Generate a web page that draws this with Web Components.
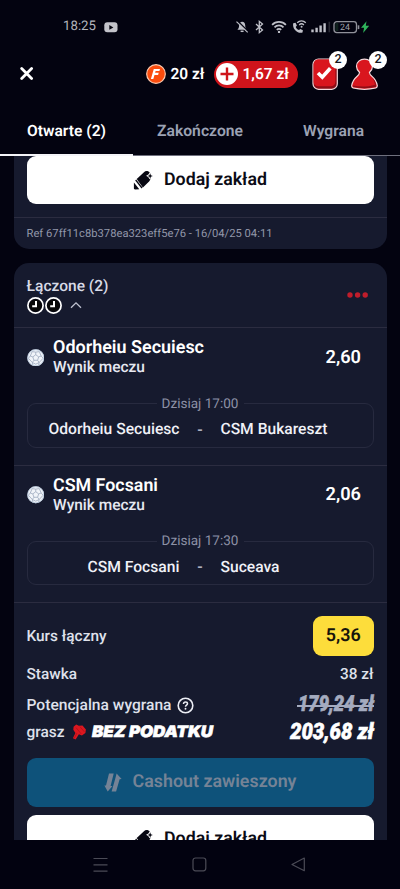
<!DOCTYPE html>
<html lang="pl">
<head>
<meta charset="utf-8">
<title>Zakłady</title>
<style>
html,body{margin:0;height:100%;overflow:hidden;background:#030310}
body{font-family:Roboto,"Liberation Sans",sans-serif;color:#e9ebf3;text-rendering:geometricPrecision}
</style>
</head>
<body>
<bet-app></bet-app>
<script>
const define = (name, html, ready) => {
  const tpl = document.createElement('template');
  tpl.innerHTML = html;
  customElements.define(name, class extends HTMLElement {
    connectedCallback() {
      if (this.shadowRoot) return;
      this.attachShadow({mode: 'open'}).append(tpl.content.cloneNode(true));
      if (ready) ready.call(this, this.shadowRoot);
    }
  });
};

/* One-line label: w = width in px, reached by font size, or by horizontal scale when "squeeze" is set */
define('ui-text', `<style>
:host{display:block;white-space:nowrap;line-height:20px;flex:none}
span{display:inline-block;transform-origin:0 50%}
</style><span><slot></slot></span>`, function (r) {
  const w = +this.getAttribute('w'), s = r.querySelector('span');
  const size = +this.getAttribute('s') || 16;
  this.style.fontSize = size + 'px';
  if (!w) return;
  const real = s.getBoundingClientRect().width;
  this.style.width = w + 'px';
  if (this.hasAttribute('squeeze')) { s.style.transform = 'scaleX(' + w / real + ')'; return; }
  this.style.fontSize = size * w / real + 'px';
  const left = w - s.getBoundingClientRect().width;
  s.style.letterSpacing = left / Math.max(1, this.textContent.length) + 'px';
});

define('status-bar', `<style>
:host{display:flex;height:54px;align-items:center;padding:0 31px 0 63px;color:#b4b5bd;box-sizing:border-box}
.sp{flex:1}svg{display:block;flex:none}
</style>
<ui-text w="33" s="14">18:25</ui-text>
<svg width="14" height="11" viewBox="0 0 14 11" style="margin-left:8px"><rect x=".3" y=".3" width="13.2" height="10" rx="3" fill="#c3c3ca"/><path d="M5.3 3.1v4.6L9.4 5.4z" fill="#05050f"/></svg>
<span class="sp"></span>
<svg width="134" height="16" viewBox="0 0 134 16" fill="none" stroke="#bfc0c8">
 <path d="M2.400 10.800c1.400-1.300 1.600-2.600 1.700-4.600.2-2.200 1.200-3.500 3.100-3.500S10.100 4 10.200 6.200c.1 2 .4 3.300 1.700 4.600z" fill="#bfc0c8" stroke="none"/><path d="M5.600 12.300h3" stroke-width="1.500"/><path d="M2.400 1.700l11 11" stroke="#030310" stroke-width="1.500"/><path d="M1.500 2.600l11.200 10.800" stroke-width="1.200"/>
 <path d="M21 5l6.500 6-3.200 2.700V2.300l3.200 2.700L21 11" stroke-width="1.300"/>
 <g stroke-width="1.700"><path d="M37.100 5.800a9.400 9.400 0 0 1 13.800 0M39.500 8.400a6.200 6.200 0 0 1 9 0M41.800 10.800a3.100 3.100 0 0 1 4.400 0"/></g><circle cx="44" cy="12.900" r="1.200" fill="#bfc0c8" stroke="none"/>
 <path d="M58.200 4.200l2.300-.4 1.400 2.700-1.200 1.400c.7 1.500 1.700 2.500 3.200 3.200l1.500-1.200 2.500 1.300-.4 2.400c-5.500 1.300-10.400-4.100-9.300-9.400z" fill="#bfc0c8" stroke="none"/><path d="M62.200 3.700a6.500 6.500 0 0 1 8.600 0M64.200 5.900a3.500 3.500 0 0 1 4.700 0" stroke-width="1.400"/><circle cx="66.600" cy="7.800" r="1" fill="#bfc0c8" stroke="none"/>
 <g stroke-width="2.400"><path d="M77.500 10.500V13.300M81.600 8.700v4.600M85.600 6.500v6.800M89.600 4.300v9"/></g><path d="M94.300 2.700v10.600" stroke="#292933" stroke-width="1.600"/>
 <rect x="99" y="2.600" width="22.500" height="11" rx="2.800" stroke="#90919a" stroke-width="1.300"/><path d="M100.300 4h3v8h-3z" fill="#173326" stroke="none" opacity=".6"/><path d="M123.500 6.300v3.800" stroke="#90919a" stroke-width="1.600"/>
 <text x="110" y="11.300" text-anchor="middle" font-family="Roboto,sans-serif" font-size="8.800" fill="#a5a5ad" stroke="none">24</text>
 <path d="M131.500 2.200l-5.500 6.600h3.100l-1 5.200 6-7.200h-3.300z" fill="#2fb55b" stroke="none"/>
</svg>`);

define('count-badge', `<style>
:host{position:absolute;right:-9px;top:-6px;width:18px;height:18px;border-radius:50%;background:#fff;color:#15151c;display:flex;align-items:center;justify-content:center;font:500 12.500px/18px Roboto,sans-serif}
</style><slot></slot>`);

define('top-bar', `<style>
:host{display:flex;align-items:center;height:40px;padding:0 21px 0 20px}
svg{display:block;flex:none}.sp{flex:1}
ui-text{color:#fff;font-weight:600}
.pill{display:flex;align-items:center;box-sizing:border-box;width:84.500px;height:27px;border-radius:14px;background:#cf141b;padding-left:2px;margin:0 14px 0 9px;gap:5px}
.ic{position:relative}
</style>
<svg width="14" height="14" viewBox="0 0 14 14" stroke="#fff" stroke-width="2.800" stroke-linecap="round"><path d="M1.700 1.500l9.900 9.900M11.600 1.500l-9.900 9.900"/></svg>
<span class="sp"></span>
<svg width="20" height="20" viewBox="0 0 20 20"><circle cx="10" cy="10" r="9.300" fill="#fb4c0d" stroke="#ffc9ae" stroke-width="1.200"/><path d="M7.800 5h6.200l-.6 2.100H9.600l-.5 1.700h3.600l-.6 2.100H8.500L7.300 15H4.900z" fill="#fff"/></svg>
<ui-text w="34" style="margin-left:5px">20 zł</ui-text>
<div class="pill"><svg width="22" height="22" viewBox="0 0 22 22"><circle cx="11" cy="11" r="11" fill="#fff"/><path d="M11 4.500v13M4.500 11h13" stroke="#cf141b" stroke-width="2.400"/></svg><ui-text w="46.500">1,67 zł</ui-text></div>
<div class="ic"><svg width="26" height="34" viewBox="0 0 26 34"><rect x="1" y="2" width="24.300" height="30.300" rx="5.500" fill="#8e0e16" stroke="#f4dadd" stroke-width="1.200"/><rect x="1.600" y="2.600" width="21.800" height="26.600" rx="4.500" fill="#d9161e"/><path d="M6 16l4.300 4.200 8-9" stroke="#fff" stroke-width="3.600" fill="none"/></svg><count-badge>2</count-badge></div>
<div class="ic" style="margin-left:13px"><svg width="28" height="34" viewBox="0 0 28 34"><path d="M8.600 15.500C6.500 13.500 5.500 11.500 5.500 9.200 5.500 5 9 2.200 13.500 2.200s8 2.800 8 7c0 2.300-1 4.300-3.100 6.300.3 1.700 1 2.500 2.400 3.700 3 2.600 4.900 5.600 5.500 9.300.1 1.200-.4 2-1.500 2.400-6.800 1.700-15.900 1.700-22.700 0C1 30.500.5 29.700.7 28.500c.6-3.700 2.500-6.700 5.500-9.300 1.400-1.200 2.100-2 2.400-3.700z" fill="#d9161e" stroke="#f4dadd" stroke-width="1.200"/><path d="M19.600 19c2.600 2.800 4 5.300 4.400 8.700-7 2.300-15 2.300-22 .9v1.400c7.500 1.500 15.500 1.500 23 0 .4-4.300-1.600-8-5.400-11z" fill="#8e0e16"/></svg><count-badge style="right:-8px">2</count-badge></div>`);

define('tab-bar', `<style>
:host{display:grid;grid-template-columns:133px 1fr 133px;height:62px;color:#9ca2b4;font-weight:600;box-shadow:inset 0 -1px #6f707e}
div{display:flex;align-items:center;justify-content:center;box-sizing:border-box;padding-top:11px}
.on{color:#fff;border-bottom:2px solid #f4f4f8;padding-top:13px}
</style>
<div class="on"><ui-text w="79">Otwarte (2)</ui-text></div><div><ui-text w="86">Zakończone</ui-text></div><div><ui-text w="61">Wygrana</ui-text></div>`);

define('action-button', `<style>
:host{display:flex;height:48.500px;border-radius:9px;background:#fff;color:#0b0b15;align-items:center;justify-content:center;font-weight:600;gap:11px;margin:0 13px}
:host([kind=cash]){background:#0e527a;color:#758396;height:49px}
</style><slot name="icon"></slot><slot></slot>`);

define('pen-icon', `<style>:host{display:block}svg{display:block}</style>
<svg width="20" height="20" viewBox="0 0 20 20" fill="#080812"><path d="M3.700 9.100L10.700 2.400c2-1.900 4.500-1.700 6 .2l-1.300 1.900-2.300 1.300 2.300 1.400 1.200 2.100.8-.8c0 1.200-.5 2.100-1.300 2.900l-6.200 6.200z"/><path d="M3.200 9.600l6.300 8-1 .9-6.300-8.100z"/><path d="M.9 12.400l5.400 6.900-4.200.1c-.8 0-1.200-.4-1.200-1.200z"/><path d="M17.200 3.200l.7 2 1.900.8-1.900.7-.7 2-.8-2-1.900-.7 1.900-.8z"/></svg>`);

define('bet-card', `<style>
:host{display:block;margin:0 13.500px;background:#161a2e;border-radius:15px;flex:none}
</style><slot></slot>`);

define('clock-icon', `<style>:host{display:block}svg{display:block}</style>
<svg width="17" height="17" viewBox="0 0 17 17"><circle cx="8.500" cy="8.500" r="7.600" fill="#080812" stroke="#fff" stroke-width="1.700"/><circle cx="8.500" cy="8.500" r="5.800" fill="#080808"/><path d="M9 4v5.200H5.200" fill="none" stroke="#fff" stroke-width="2"/></svg>`);

define('ball-icon', `<style>:host{display:block}svg{display:block}</style>
<svg width="17.500" height="17.500" viewBox="0 0 18 18"><circle cx="9" cy="9" r="8.700" fill="#f1f4f9"/><g fill="none" stroke="#9aa7bc" stroke-width=".8"><path d="M9 5.900l3 2.200-1.100 3.500H7.100L6 8.100zM9 5.900V3.200M12 8.100l2.600-.9M10.900 11.600l1.600 2.300M7.100 11.600l-1.600 2.300M6 8.100l-2.600-.9M5.300 2.700L9 3.200l3.700-.5 1.900 4.500 2 2.300-4.100 4.400-.5 2.500M9 15.600l3.500-1.700M9 15.600l-3.500-1.700.5 2.500M5.500 13.900L1.400 9.500l2-2.300 1.900-4.500"/></g><circle cx="9" cy="9" r="8.300" fill="none" stroke="#afc2d9" stroke-width=".8"/></svg>`);

define('bet-leg', `<style>
:host{display:block;height:137.500px;box-sizing:border-box;border-bottom:1px solid #2b2c40;padding:10px 13px 0}
.row{display:flex;align-items:center;height:39px}
.names{display:flex;flex-direction:column;flex:1;padding-left:9px}
.names ::slotted([slot=pick]){font-weight:600;color:#fff}
.names ::slotted([slot=market]){line-height:19px;font-weight:500;color:#e7e9f2}
::slotted([slot=odds]){font-weight:600;color:#fff;margin-right:12.500px}
fieldset{margin:16.500px 0 0;border:1px solid #272a3f;border-radius:9px;padding:0;height:54px;min-width:0;width:347px;box-sizing:border-box}
legend{margin:0 auto;padding:0 5px;color:#8d91a6}
.teams{display:grid;grid-template-columns:1fr 41px 1fr;align-items:center;height:32px;color:#f0f1f7;font-weight:500;margin-top:-.5px}
.teams ::slotted([slot=home]){justify-self:end}
.dash{justify-self:center;color:#b3b6c4;font-size:16px}
</style>
<div class="row"><ball-icon></ball-icon><div class="names"><slot name="pick"></slot><slot name="market"></slot></div><slot name="odds"></slot></div>
<fieldset><legend><slot name="time"></slot></legend><div class="teams"><slot name="home"></slot><span class="dash">-</span><slot name="away"></slot></div></fieldset>`);

define('bet-summary', `<style>
:host{display:block;padding:13px 13px 0;color:#dfe1eb;font-weight:500}
.r{display:flex;align-items:center;justify-content:space-between}
.odds{width:60.500px;height:40px;border-radius:9px;background:#fddd3b;color:#16140b;display:flex;align-items:center;justify-content:center;font-weight:600}
.l{display:flex;align-items:center}
.big{font-style:italic;font-weight:900;color:#fff;-webkit-text-stroke:.6px currentColor}
.old{color:#a4abbf;position:relative}
.old::after{content:"";position:absolute;left:-1px;right:0;top:10px;height:2px;background:#a4abbf}
svg{display:block}
</style>
<div class="r" style="height:40px"><ui-text w="80">Kurs łączny</ui-text><div class="odds"><ui-text w="35">5,36</ui-text></div></div>
<div class="r" style="height:35px"><ui-text w="50.500">Stawka</ui-text><ui-text w="33.500">38 zł</ui-text></div>
<div class="r" style="height:28px"><div class="l"><ui-text w="145">Potencjalna wygrana</ui-text><svg width="17" height="17" viewBox="0 0 17 17" style="margin-left:5px"><circle cx="8.500" cy="8.500" r="7.300" fill="none" stroke="#eceef5" stroke-width="1.600"/><path d="M6.500 7c.1-1.300.9-1.900 2-1.900s2 .6 2 1.700c0 1.400-1.900 1.400-2 2.900" fill="none" stroke="#eceef5" stroke-width="1.500"/><circle cx="8.500" cy="11.700" r=".95" fill="#eceef5"/></svg></div><ui-text class="big old" w="76" s="22" squeeze>179,24 zł</ui-text></div>
<div class="r" style="height:25px"><div class="l"><ui-text w="38">grasz</ui-text><svg width="15" height="16" viewBox="0 0 15 16" style="margin:0 5px 0 7px"><path d="M4.200.6l2.600 1.200 3.700-.4 3.400 4.200-.5 3.500-3.500 2.500-3-1.400-3.300 5.400-2.700-1.400 2.500-5.300L1.300 5.700l.3-2.900z" fill="#dc171f"/><path d="M4 3.600l5.300 6.400M7.800 2.500l4.500 5.300M5 8.900l-2.700 5.300" stroke="#a10e18" stroke-width=".6"/></svg><ui-text class="big" style="font-family:Inter,sans-serif" w="121" s="15.800" squeeze>BEZ PODATKU</ui-text></div><ui-text class="big" w="84" s="22.500" squeeze>203,68 zł</ui-text></div>`);

define('nav-bar', `<style>
:host{display:flex;height:49px;align-items:center;justify-content:center;background:#020210;gap:84px;padding-right:2px;box-sizing:border-box}
svg{display:block}
</style>
<svg width="15" height="16" viewBox="0 0 15 16" stroke="#4b4b56" stroke-width="1.200"><path d="M.5 1.500h14M.5 7.800h14M.5 14.100h14"/></svg>
<svg width="15" height="15" viewBox="0 0 15 15" fill="none" stroke="#4b4b56" stroke-width="1.200"><rect x="1" y="1" width="12.800" height="12.800" rx="2.500"/></svg>
<svg width="15" height="15" viewBox="0 0 15 15" fill="none" stroke="#4b4b56" stroke-width="1.200" stroke-linejoin="round"><path d="M13.300 1L1 7.500l12.300 6.200z"/></svg>`);

define('bet-app', `<style>
:host{display:flex;flex-direction:column;width:400px;height:889px;background:#030310;overflow:hidden}
main{flex:1;overflow:hidden;display:flex;flex-direction:column;gap:14px;min-height:0}
.prev{border-radius:0 0 15px 15px;height:93px}
.ref{border-top:1px solid #2b2c40;margin-top:13.500px;padding:5.500px 13px 0;color:#9297aa}
.head{display:flex;justify-content:space-between;align-items:center;height:65px;box-sizing:border-box;border-bottom:1px solid #2b2c40;padding:0 18px 0 13px;color:#d8dae6;font-weight:500}
.icons{display:flex;align-items:center;gap:1px;height:19px}
svg{display:block}
</style>
<status-bar></status-bar>
<top-bar></top-bar>
<tab-bar></tab-bar>
<main>
 <bet-card class="prev"><action-button style="height:47.500px"><pen-icon slot="icon"></pen-icon><ui-text w="103">Dodaj zakład</ui-text></action-button>
 <div class="ref"><ui-text w="246" s="12">Ref 67ff11c8b378ea323eff5e76 - 16/04/25 04:11</ui-text></div></bet-card>
 <bet-card>
  <div class="head"><div><ui-text w="82">Łączone (2)</ui-text><div class="icons"><clock-icon></clock-icon><clock-icon></clock-icon><svg width="12" height="8" viewBox="0 0 12 8" style="margin-left:7px"><path d="M1 6.800l5-5 5 5" fill="none" stroke="#bfc2d1" stroke-width="1.300"/></svg></div></div>
  <svg width="22" height="6" viewBox="0 0 22 6" fill="#c01d2b"><circle cx="3" cy="3" r="2.700"/><circle cx="10.600" cy="3" r="2.700"/><circle cx="18.200" cy="3" r="2.700"/></svg></div>
  <bet-leg><ui-text slot="pick" w="151">Odorheiu Secuiesc</ui-text><ui-text slot="market" w="92">Wynik meczu</ui-text><ui-text slot="odds" w="35.500">2,60</ui-text><ui-text slot="time" w="77">Dzisiaj 17:00</ui-text><ui-text slot="home" w="131">Odorheiu Secuiesc</ui-text><ui-text slot="away" w="107">CSM Bukareszt</ui-text></bet-leg>
  <bet-leg><ui-text slot="pick" w="105">CSM Focsani</ui-text><ui-text slot="market" w="92">Wynik meczu</ui-text><ui-text slot="odds" w="35.500">2,06</ui-text><ui-text slot="time" w="77">Dzisiaj 17:30</ui-text><ui-text slot="home" w="92">CSM Focsani</ui-text><ui-text slot="away" w="59">Suceava</ui-text></bet-leg>
  <bet-summary></bet-summary>
  <action-button kind="cash" style="margin-top:13.500px"><svg slot="icon" width="18" height="19" viewBox="0 0 18 19" fill="#758396"><path d="M5 .5h4.700L6.600 13l1.900.1-4.800 5.400L.4 12.600l1.600-.1z"/><path d="M12.600.5l5 5.600-2 .1-3.500 12.300H7.600l3.500-12.300z"/></svg><ui-text w="164">Cashout zawieszony</ui-text></action-button>
  <action-button style="margin-top:8px"><pen-icon slot="icon"></pen-icon><ui-text w="103">Dodaj zakład</ui-text></action-button>
 </bet-card>
</main>
<nav-bar></nav-bar>`);
</script>
</body>
</html>
